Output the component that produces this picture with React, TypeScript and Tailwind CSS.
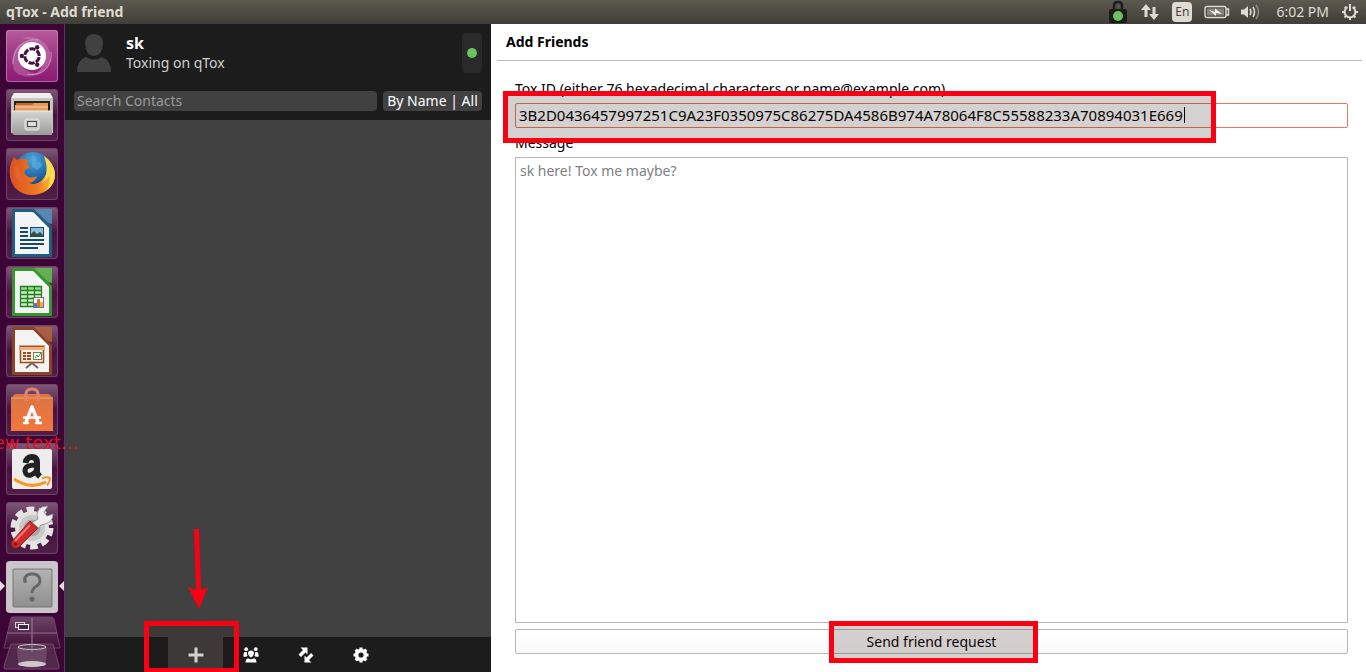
import React, { useState } from 'react';

const TOX_ID = '3B2D0436457997251C9A23F0350975C86275DA4586B974A78064F8C55588233A70894031E669';

// Red marker frame with a light grey tint
const Marker: React.FC<{ className: string }> = ({ className }) => (
  <div className={`absolute pointer-events-none border-5 border-[#fb0013] bg-[#2c1814]/20 ${className}`} />
);

/* ---------- Launcher icons, all on a 52x52 tile ---------- */

const DashIcon = () => (
  <svg viewBox="0 0 52 52" className="w-full h-full">
    <defs>
      <linearGradient id="dash" x1="0" y1="0" x2="0" y2="1">
        <stop offset="0" stopColor="#b65b9b" />
        <stop offset="0.45" stopColor="#a03a86" />
        <stop offset="1" stopColor="#8b1a73" />
      </linearGradient>
    </defs>
    <rect width="52" height="52" rx="3" fill="url(#dash)" />
    <path d="M16 8C34 3 48 18 44 32C42 39 36 45 28 45C40 37 42 24 34 16C28 11 22 9 16 8Z" fill="#d08bbf" opacity=".45" />
    <path d="M8 40C3 22 13 9 28 11C18 14 13 22 14 31C16 40 24 44 34 43C24 49 13 47 8 40Z" fill="#d08bbf" opacity=".4" />
    <path d="M7 34C7 18 18 8 33 10M45 22C47 38 34 47 21 44" fill="none" stroke="#e0a9d3" strokeWidth="1" opacity=".7" />
    <circle cx="26" cy="26" r="14" fill="#fff" />
    <circle cx="26" cy="26" r="7.2" fill="none" stroke="#4b1240" strokeWidth="3" strokeDasharray="6.2 1.34" strokeDashoffset="-1" />
    <circle cx="15.800" cy="26" r="2.200" fill="#4b1240" />
    <circle cx="31.200" cy="17.200" r="2.200" fill="#4b1240" />
    <circle cx="31.200" cy="34.800" r="2.200" fill="#4b1240" />
    <rect x=".5" y=".5" width="51" height="51" rx="3" fill="none" stroke="#c987b6" opacity=".7" />
  </svg>
);

const FilesIcon = () => (
  <svg viewBox="0 0 52 52" className="w-full h-full">
    <defs>
      <linearGradient id="drawer" x1="0" y1="0" x2="0" y2="1">
        <stop offset="0" stopColor="#d5d5d3" />
        <stop offset="1" stopColor="#9b9b99" />
      </linearGradient>
    </defs>
    <path d="M8 4H44L47 10V44H5V10Z" fill="#c6c6c4" />
    <path d="M8 4H44L47 9H5Z" fill="#efefed" />
    <rect x="8" y="12" width="36" height="14" fill="#2b211b" />
    <path d="M10 14H40L42 22H9Z" fill="#b96832" />
    <path d="M9 16H26L28 14H42V23H9Z" fill="#e59a5b" />
    <path d="M9 18H42" stroke="#f9d3a4" strokeWidth="1.2" />
    <path d="M6 22H46V46H8L6 44Z" fill="url(#drawer)" />
    <path d="M6 22H46" stroke="#eee" />
    <rect x="19" y="30" width="14" height="11" rx="2" fill="#c9c9c7" stroke="#e8e8e6" />
    <rect x="21.500" y="32.500" width="9" height="5" fill="#ddd" stroke="#474747" />
  </svg>
);

const FirefoxIcon = () => (
  <svg viewBox="0 0 52 52" className="w-full h-full">
    <defs>
      <radialGradient id="globe" cx=".5" cy=".2" r=".8">
        <stop offset="0" stopColor="#4fa5d8" />
        <stop offset=".6" stopColor="#1f65a8" />
        <stop offset="1" stopColor="#123468" />
      </radialGradient>
      <linearGradient id="fox" x1="0" y1="0" x2="1" y2="0">
        <stop offset="0" stopColor="#d9501e" />
        <stop offset=".6" stopColor="#ee7a22" />
        <stop offset="1" stopColor="#f9c934" />
      </linearGradient>
    </defs>
    <circle cx="27" cy="23" r="19" fill="url(#globe)" />
    <path d="M26 7Q32 9 30 15Q36 12 36 18L31 22L26 19Z" fill="#5caede" opacity=".6" />
    <path d="M5 15L8 9L11 12Q16 9 22 12L21 16L24 19L19 22Q17 25 21 28Q25 31 31 28Q29 34 23 35Q31 38 37 31Q43 24 41 15Q40 10 38 8Q48 15 49 26Q49 37 40 43Q28 50 16 45Q6 40 4 29Q3 21 5 15Z" fill="url(#fox)" />
    <path d="M38 8Q48 15 49 26Q49 36 41 42Q45 34 43 28Q40 33 36 35Q44 25 38 8Z" fill="#fadb50" />
    <path d="M13 20Q13 31 24 35Q15 37 10 30Q8 25 9 18Z" fill="#e7632a" />
  </svg>
);

interface DocProps {
  edge: string;
  fold: string;
  children: React.ReactNode;
}

const DocIcon: React.FC<DocProps> = ({ edge, fold, children }) => (
  <svg viewBox="0 0 52 52" className="w-full h-full">
    <path d="M6 2H28L46 20V50H6Z" fill={edge} />
    <path d="M28 2H46V17L42 16Z" fill={fold} opacity=".85" />
    <path d="M9 5H27L43 21V47H9Z" fill="#f2f4f4" />
    <path d="M27 5L42 21L34 18Z" fill="#fff" />
    {children}
  </svg>
);

const WriterIcon = () => (
  <DocIcon edge="#1d5e86" fold="#4f93bd">
    <path d="M14 21H22M14 25H22M14 29H22M14 33H38M14 37H38M14 41H32" stroke="#154a6b" strokeWidth="2" />
    <rect x="24.500" y="20.500" width="13" height="9" fill="#8cc1e0" stroke="#154a6b" />
    <path d="M25 29V27L28 24L31 27L34 25L37 28V29Z" fill="#38503a" />
  </DocIcon>
);

const CalcIcon = () => (
  <DocIcon edge="#35962f" fold="#62c24d">
    <path d="M14 20H36V40H14Z" fill="#c9f2bf" />
    <path d="M14 20H36V24H14Z" fill="#8fe07f" />
    <path d="M14.500 20.500H35.500V40.500H14.500ZM14 24.500H36M14 28.500H36M14 32.500H36M14 36.500H36M21.500 20V40M28.500 20V40" fill="none" stroke="#247c24" strokeWidth="1.300" />
    <rect x="27.500" y="31.500" width="10" height="10" fill="#fff" stroke="#7b6f6b" />
    <path d="M28 37H31V41H28Z" fill="#3c84c4" />
    <path d="M31 33H34V41H31Z" fill="#d7722e" />
    <path d="M34 36H37V41H34Z" fill="#e9b043" />
  </DocIcon>
);

const ImpressIcon = () => (
  <DocIcon edge="#8b4524" fold="#b4633b">
    <path d="M13 20H39V25H13Z" fill="#f3c49a" />
    <rect x="14.500" y="21.500" width="23" height="16" fill="#fff0e0" stroke="#a14f22" strokeWidth="1.600" />
    <path d="M14 22H38V25H14Z" fill="#eeb080" />
    <path d="M17 28H20M17 31H20M17 34H20M21 28H25M21 31H25M21 34H25" stroke="#984a21" strokeWidth="2" />
    <rect x="27.500" y="27.500" width="8" height="7" fill="#fff" stroke="#568a4d" />
    <path d="M29 33L31 30L32 32L35 28" fill="none" stroke="#3e8a3c" />
    <path d="M26 38L20 43M26 38L32 43" stroke="#6b6b6b" strokeWidth="2" />
  </DocIcon>
);

const SoftwareIcon = () => (
  <svg viewBox="0 0 52 52" className="w-full h-full">
    <defs>
      <linearGradient id="bag" x1="0" y1="0" x2="0" y2="1">
        <stop offset="0" stopColor="#d97545" />
        <stop offset="1" stopColor="#f3763c" />
      </linearGradient>
    </defs>
    <path d="M5 14L9 10H43L47 14V47H5Z" fill="url(#bag)" />
    <path d="M5 14H47" stroke="#f39b6c" />
    <path d="M20 17V10Q20 5 26 5Q32 5 32 10V17" fill="none" stroke="#e2836c" strokeWidth="3" />
    <path d="M20 38L26 23L32 38" fill="none" stroke="#fff" strokeWidth="3.400" strokeLinejoin="round" />
    <path d="M18 33.500H34M18 39H22M30 39H35" stroke="#fff" strokeWidth="2.400" strokeLinecap="round" />
  </svg>
);

const AmazonIcon = () => (
  <svg viewBox="0 0 52 52" className="w-full h-full">
    <rect x="6" y="6" width="40" height="40" rx="2" fill="#ededed" />
    <path d="M19.500 20Q20.500 14 26 14Q31 14 31 19.500V29Q31 31 34 33.500" fill="none" stroke="#222" strokeWidth="6" />
    <path d="M31 22Q18.500 21.500 19 28Q20 33.500 25 32Q30 30 31 25" fill="none" stroke="#222" strokeWidth="5" />
    <path d="M8 36Q24 47 40 39" fill="none" stroke="#f29a20" strokeWidth="3" />
    <path d="M36 35.500Q41 33.500 44 35Q44 39 41 42.500" fill="none" stroke="#f29a20" strokeWidth="2" />
  </svg>
);

const SettingsIcon = () => (
  <svg viewBox="0 0 52 52" className="w-full h-full">
    <circle cx="26" cy="26" r="17" fill="#e2e2e0" />
    <circle cx="26" cy="26" r="18.500" fill="none" stroke="#e4e4e2" strokeWidth="6" strokeDasharray="7.500 4.125" />
    <circle cx="26" cy="26" r="13" fill="#c9c9c7" />
    <circle cx="26" cy="26" r="8.500" fill="#aaa4a4" />
    <path d="M25 21L32 17Q29 9 36 5L42 4L38 10L41 14L47 12Q47 20 39 22L35 23L30 29Z" fill="#eeeeec" stroke="#8b8b89" strokeWidth=".8" />
    <path d="M24 19L32 26L13 45Q9 48 6 44Q4 41 7 38Z" fill="#cf2b2b" stroke="#8d1717" strokeWidth=".8" />
    <path d="M24 23L9 39" stroke="#ee7a76" strokeWidth="2" />
    <circle cx="9.500" cy="42" r="1.600" fill="#671010" />
  </svg>
);

const UnknownIcon = () => (
  <svg viewBox="0 0 52 52" className="w-full h-full">
    <defs>
      <linearGradient id="unknown" x1="0" y1="0" x2="0" y2="1">
        <stop offset="0" stopColor="#b3b3b3" />
        <stop offset="1" stopColor="#8f8f8f" />
      </linearGradient>
    </defs>
    <rect width="52" height="52" rx="4" fill="#c9c5c9" />
    <rect x="7" y="8" width="39" height="38" rx="1" fill="url(#unknown)" stroke="#777" />
    <path d="M18.500 19Q19 13 26 13Q34 13 34 20Q34 23 30 25.500Q26 28 26 32" fill="none" stroke="#666" strokeWidth="2.800" />
    <circle cx="19" cy="20" r="2" fill="#666" />
    <circle cx="26" cy="38" r="2.500" fill="#666" />
  </svg>
);

const launcherItems = [
  { name: 'Search your computer', icon: <DashIcon /> },
  { name: 'Files', icon: <FilesIcon /> },
  { name: 'Firefox Web Browser', icon: <FirefoxIcon /> },
  { name: 'LibreOffice Writer', icon: <WriterIcon /> },
  { name: 'LibreOffice Calc', icon: <CalcIcon /> },
  { name: 'LibreOffice Impress', icon: <ImpressIcon /> },
  { name: 'Ubuntu Software', icon: <SoftwareIcon /> },
  { name: 'Amazon', icon: <AmazonIcon /> },
  { name: 'System Settings', icon: <SettingsIcon /> },
  { name: 'qTox', icon: <UnknownIcon />, active: true },
];

const Launcher = () => (
  <nav className="relative w-[65px] shrink-0 bg-[#3d0535] border-r border-[#64345c] flex flex-col items-center gap-[7px] pt-[6px]">
    {launcherItems.map(item => (
      <button
        key={item.name}
        aria-label={item.name}
        className="relative w-[52px] h-[52px] shrink-0 rounded bg-linear-to-b from-[#80597a] via-[#48123f] to-[#501f48] ring-1 ring-inset ring-[#6f4567]"
      >
        {item.icon}
        {item.active && (
          <svg viewBox="0 0 64 10" className="absolute -left-[6px] top-5 w-16 h-[10px]">
            <path d="M0 0L5 5L0 10ZM64 0L59 5L64 10Z" fill="#e6dde5" />
          </svg>
        )}
      </button>
    ))}
    {/* Workspace switcher and trash, folded at the bottom */}
    <svg viewBox="0 0 60 57" className="w-[60px] h-[57px] shrink-0 -mt-1">
      <defs>
        <linearGradient id="folded" x1="0" y1="0" x2="0" y2="1">
          <stop offset="0" stopColor="#6c4566" />
          <stop offset="1" stopColor="#400d38" />
        </linearGradient>
      </defs>
      <path d="M9 2Q9 1 11 1H49Q51 1 52 3L58 32H2Z" fill="url(#folded)" stroke="#6b4565" />
      <path d="M5 17H55" stroke="#8d6c8a" />
      <rect x="13.500" y="6.500" width="9" height="5" fill="none" stroke="#d8ced7" />
      <rect x="16.500" y="8.500" width="10" height="5" fill="#45243f" stroke="#fff" />
      <path d="M9 28H51L57 50Q58 53 55 53H4Q1 53 2 50Z" fill="#573050" opacity=".8" stroke="#7d5c78" />
      <path d="M15 31H45L44 49Q30 54 16 49Z" fill="#7d5b79" opacity=".6" />
      <ellipse cx="30" cy="31" rx="14" ry="2.500" fill="#5d3a58" stroke="#cfc3ce" />
      <ellipse cx="30" cy="48" rx="14" ry="3" fill="#cfc5ce" />
      <path d="M30 2V36" stroke="#a284a0" />
    </svg>
    <span className="absolute right-[-14px] top-[407px] z-20 whitespace-nowrap font-['DejaVu_Sans'] text-lg leading-6 text-[#e01224]">
      New text...
    </span>
  </nav>
);

const TopPanel = () => (
  <header className="h-6 shrink-0 flex items-center justify-between pl-[6px] pr-[7px] bg-linear-to-b from-[#5c594f] to-[#403e38] text-[#dfdbd2] text-sm">
    <h1 className="font-bold">qTox - Add friend</h1>
    <div className="flex items-center">
      <svg viewBox="0 0 20 24" className="w-5 h-6 mr-[13px]">
        <path d="M6 10V6Q6 2 10 2Q14 2 14 6V10" fill="none" stroke="#1c1c1c" strokeWidth="2.500" />
        <rect x="1" y="9" width="18" height="14" rx="2" fill="#1c1c1c" />
        <circle cx="10" cy="16" r="5" fill="#6bc260" />
      </svg>
      <svg viewBox="0 0 18 18" className="w-[18px] h-[18px] mr-[13px]" fill="#dfdbd2">
        <path d="M5 1L10 7H6.500V14H3.500V7H0ZM13 17L8 11H11.500V4H14.500V11H18Z" />
      </svg>
      <span className="w-5 h-5 mr-3 rounded-sm bg-[#dfdbd2] text-[#454239] text-xs leading-5 text-center">En</span>
      <svg viewBox="0 0 26 14" className="w-[26px] h-[14px] mr-[10px]">
        <rect x="1" y="1.500" width="21" height="11" rx="2" fill="none" stroke="#dfdbd2" strokeWidth="1.400" />
        <rect x="3" y="3.500" width="17" height="7" fill="#86837a" />
        <path d="M22 4H24.500V10H22" fill="none" stroke="#dfdbd2" strokeWidth="1.400" />
        <path d="M5 5L11 7V3.500L18 9L12 8V11Z" fill="#f5f3ee" />
      </svg>
      <svg viewBox="0 0 20 16" className="w-5 h-4 mr-4" fill="none" stroke="#dfdbd2" strokeWidth="1.600">
        <path d="M1 5.500H4L8 2V14L4 10.500H1Z" fill="#dfdbd2" stroke="none" />
        <path d="M10 5Q12 8 10 11M13 3Q16 8 13 13" />
        <path d="M16 1Q21 8 16 15" opacity=".4" />
      </svg>
      <time className="mr-3">6:02 PM</time>
      <svg viewBox="0 0 18 18" className="w-[18px] h-[18px]" fill="none" stroke="#dfdbd2">
        <path d="M6.500 4.200A5.400 5.400 0 1 0 11.500 4.200" strokeWidth="2" />
        <path d="M9 1V8" strokeWidth="2" />
        <path d="M3.800 3.800L5 5M14.200 3.800L13 5M1 9H4M14 9H17M3.500 14.500L5 13M14.500 14.500L13 13M9 14V17" strokeWidth="2" />
      </svg>
    </div>
  </header>
);

const PlusIcon = () => (
  <svg viewBox="0 0 16 16" className="w-4 h-4">
    <path d="M8 0.500V15.500M0.500 8H15.500" stroke="#fff" strokeWidth="3" />
  </svg>
);

const GroupIcon = () => (
  <svg viewBox="0 0 16 16" className="w-4 h-4" fill="#fff">
    <circle cx="3.200" cy="2.200" r="1.900" />
    <circle cx="12.800" cy="2.200" r="1.900" />
    <path d="M5 6.500Q5 3.500 8 3.500Q11 3.500 11 6.500Q10.500 9.500 8 10.500Q5.500 9.500 5 6.500Z" />
    <path d="M1.500 5H3.800Q3.800 7.500 4.500 9L3 9.800H0.500Q0 7 1.500 5ZM14.500 5H12.200Q12.200 7.500 11.500 9L13 9.800H15.500Q16 7 14.500 5Z" />
    <path d="M2.500 15.500Q2.300 12 5 11.300Q8 13 11 11.300Q13.700 12 13.500 15.500Z" />
  </svg>
);

const TransferIcon = () => (
  <svg viewBox="0 0 16 16" className="w-4 h-4" fill="#fff">
    <path d="M2.500 0.500H9.500V7.500L7.500 5.500L3 10L0.500 7.500L5 3Z" />
    <path d="M13.500 15.500H6.500V8.500L8.500 10.500L13 6L15.500 8.500L11 13Z" />
  </svg>
);

const GearIcon = () => (
  <svg viewBox="0 0 16 16" className="w-4 h-4" fill="none" stroke="#fff">
    <circle cx="8" cy="8" r="4.400" strokeWidth="3.600" />
    <path d="M8 0.500V3M8 13V15.500M0.500 8H3M13 8H15.500M2.700 2.700L4.400 4.400M11.600 11.600L13.300 13.300M13.300 2.700L11.600 4.400M4.400 11.600L2.700 13.300" strokeWidth="3.200" />
  </svg>
);

const Sidebar = () => (
  <aside className="w-[426px] shrink-0 flex flex-col bg-[#414141] text-white">
    <div className="h-24 shrink-0 bg-[#1c1c1c] px-[9px] pt-[9px]">
      <div className="flex items-center h-10">
        <svg viewBox="0 0 34 38" className="w-[34px] h-[38px] ml-[3px] mr-[15px]" fill="#414141">
          <path d="M17 0Q26 0 26 10Q25 22 17 22Q9 22 8 10Q8 0 17 0Z" />
          <path d="M0 38Q0 26 9 23Q17 28 25 23Q34 26 34 38Z" />
        </svg>
        <div className="flex-1">
          <div className="text-base leading-5 font-bold">sk</div>
          <div className="text-sm leading-5 text-[#d0d0d0]">Toxing on qTox</div>
        </div>
        <button aria-label="Status: online" className="w-5 h-10 rounded bg-[#2a2a2a] flex items-center justify-center">
          <span className="w-[10px] h-[10px] rounded-full bg-[#6bc260]" />
        </button>
      </div>
      <div className="flex gap-[6px] mt-[18px]">
        <input
          type="text"
          aria-label="Search Contacts"
          placeholder="Search Contacts"
          className="flex-1 min-w-0 h-5 px-[3px] rounded bg-[#414141] text-sm placeholder:text-[#999] outline-none"
        />
        <button className="w-[99px] h-5 rounded bg-[#414141] text-sm leading-5 whitespace-nowrap">By Name | All</button>
      </div>
    </div>

    <div className="flex-1" />

    <div className="h-[35px] shrink-0 bg-[#1c1c1c] flex justify-center">
      <button aria-label="Add friend" className="relative w-[55px] flex items-center justify-center bg-[#414141]">
        <PlusIcon />
        <Marker className="-left-6 -top-4 w-[95px] h-[52px]" />
        <svg viewBox="0 0 20 80" className="absolute left-5 -top-[108px] w-5 h-20">
          <path d="M6 0H11L13 61L20 58L11 80L0 58L8 61Z" fill="#fb0013" />
        </svg>
      </button>
      <button aria-label="Group chats" className="w-[55px] flex items-center justify-center"><GroupIcon /></button>
      <button aria-label="File transfers" className="w-[55px] flex items-center justify-center"><TransferIcon /></button>
      <button aria-label="Settings" className="w-[55px] flex items-center justify-center"><GearIcon /></button>
    </div>
  </aside>
);

const AddFriendForm = () => {
  const [toxId, setToxId] = useState(TOX_ID);
  const [message, setMessage] = useState('');

  return (
    <main className="flex-1 min-w-0 flex flex-col bg-white text-black">
      <h2 className="h-9 pl-[15px] text-sm leading-9 font-bold">Add Friends</h2>
      <hr className="ml-[6px] mr-1 border-[#b8b8b8]" />
      <form className="flex-1 min-h-0 flex flex-col pl-6 pr-[18px] pt-[17px] pb-[18px]" onSubmit={e => e.preventDefault()}>
        <label htmlFor="tox-id" className="h-[21px] text-sm leading-[21px]">
          Tox ID (either 76 hexadecimal characters or name@example.com)
        </label>
        <div className="relative mt-1">
          <input
            id="tox-id"
            type="text"
            value={toxId}
            onChange={e => setToxId(e.target.value)}
            className="block w-full h-[25px] px-[3px] pb-[2px] text-[15px] border border-solid border-[#e07a5a] rounded-xs outline-none"
          />
          <span className="absolute left-[669px] top-1 w-px h-4 bg-black" />
          <Marker className="-left-3 -top-3 w-[713px] h-[52px]" />
        </div>
        <label htmlFor="message" className="mt-1 h-[21px] text-sm leading-[21px]">Message</label>
        <textarea
          id="message"
          value={message}
          onChange={e => setMessage(e.target.value)}
          placeholder="sk here! Tox me maybe?"
          className="flex-1 mt-1 px-1 py-[3px] text-sm border border-[#b8b8b8] resize-none outline-none placeholder:text-[#808080]"
        />
        <div className="relative mt-[6px]">
          <button
            type="submit"
            className="block w-full h-[25px] text-sm border border-[#b8b8b8] rounded-xs bg-linear-to-b from-white to-[#fafafa]"
          >
            Send friend request
          </button>
          <Marker className="left-1/2 -ml-[103px] -top-2 w-[209px] h-[42px]" />
        </div>
      </form>
    </main>
  );
};

const App = () => (
  <div className="h-screen flex flex-col overflow-hidden font-['Noto_Sans',sans-serif]">
    <TopPanel />
    <div className="flex-1 min-h-0 flex">
      <Launcher />
      <Sidebar />
      <AddFriendForm />
    </div>
  </div>
);

export default App;
